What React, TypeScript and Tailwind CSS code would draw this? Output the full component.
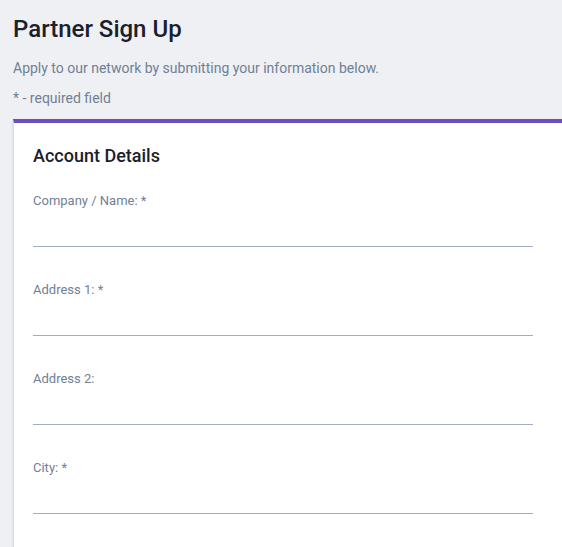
const fields = ["Company / Name: *", "Address 1: *", "Address 2:", "City: *"];

export default function App() {
  return (
    <div className="min-h-[547px] bg-[#eef0f3] pl-[13px] pt-[13px] overflow-hidden" style={{ fontFamily: "Roboto, 'Noto Sans', sans-serif" }}>
      <h1 className="text-[24px] leading-[32px] font-medium text-[#1a202c]">Partner Sign Up</h1>
      <p className="mt-[13px] text-[14px] leading-[20px] text-[#718096]">
        Apply to our network by submitting your information below.
      </p>
      <p className="mt-[10px] text-[14px] leading-[20px] text-[#718096]">* - required field</p>

      <div className="mt-[11px] w-[600px] bg-white border-t-4 border-t-[#6a4fc0] border-l border-l-[#d9dde3] shadow-sm pt-[21px] pl-[19px] pb-10">
        <h2 className="text-[18px] leading-[24px] font-medium text-[#1a202c]">Account Details</h2>
        <div className="mt-[25px] flex flex-col gap-[35px]">
          {fields.map((f) => (
            <div key={f}>
              <label className="block text-[13px] leading-[16px] text-[#718096]">{f}</label>
              <input className="block w-[500px] h-[38px] border-b border-[#a0aec0] outline-none bg-transparent text-[13px] text-[#1a202c]" />
            </div>
          ))}
        </div>
      </div>
    </div>
  );
}
